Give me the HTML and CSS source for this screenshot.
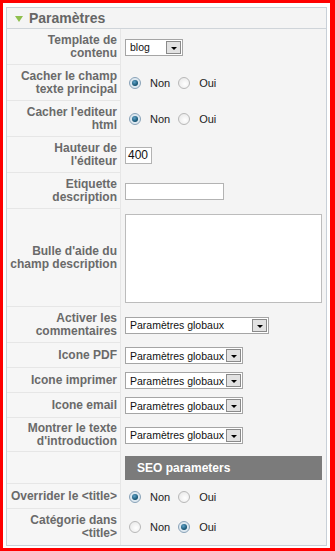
FILE: index.html
```html
<!DOCTYPE html>
<html lang="fr">
<head>
    <meta charset="UTF-8">
    <meta name="viewport" content="width=device-width, initial-scale=1.0">
    <title>Paramètres</title>
    <link rel="stylesheet" href="styles.css">
</head>
<body>

    <!-- Parameters pane -->
    <div class="frame">
        <div class="panel">
            <h3 class="panel-title"><span class="toggler"></span>Paramètres</h3>

            <div class="param">
                <div class="key">Template de<br>contenu</div>
                <div class="value">
                    <div class="select" style="width: 58px"><span>blog</span><i class="arrow"></i></div>
                </div>
            </div>

            <div class="param">
                <div class="key">Cacher le champ<br>texte principal</div>
                <div class="value">
                    <span class="radio on"></span><span class="opt">Non</span>
                    <span class="radio"></span><span class="opt">Oui</span>
                </div>
            </div>

            <div class="param">
                <div class="key">Cacher l'editeur<br>html</div>
                <div class="value">
                    <span class="radio on"></span><span class="opt">Non</span>
                    <span class="radio"></span><span class="opt">Oui</span>
                </div>
            </div>

            <div class="param">
                <div class="key">Hauteur de<br>l'éditeur</div>
                <div class="value">
                    <div class="text-input" style="width: 27px">400</div>
                </div>
            </div>

            <div class="param">
                <div class="key">Etiquette<br>description</div>
                <div class="value">
                    <div class="text-input" style="width: 99px"></div>
                </div>
            </div>

            <div class="param tall">
                <div class="key">Bulle d'aide du<br>champ description</div>
                <div class="value">
                    <div class="textarea"></div>
                </div>
            </div>

            <div class="param">
                <div class="key">Activer les<br>commentaires</div>
                <div class="value">
                    <div class="select" style="width: 144px"><span>Paramètres globaux</span><i class="arrow"></i></div>
                </div>
            </div>

            <div class="param short">
                <div class="key">Icone PDF</div>
                <div class="value">
                    <div class="select" style="width: 118px"><span>Paramètres globaux</span><i class="arrow"></i></div>
                </div>
            </div>

            <div class="param short">
                <div class="key">Icone imprimer</div>
                <div class="value">
                    <div class="select" style="width: 118px"><span>Paramètres globaux</span><i class="arrow"></i></div>
                </div>
            </div>

            <div class="param short">
                <div class="key">Icone email</div>
                <div class="value">
                    <div class="select" style="width: 118px"><span>Paramètres globaux</span><i class="arrow"></i></div>
                </div>
            </div>

            <div class="param intro">
                <div class="key">Montrer le texte<br>d'introduction</div>
                <div class="value">
                    <div class="select" style="width: 118px"><span>Paramètres globaux</span><i class="arrow"></i></div>
                </div>
            </div>

            <div class="param seo">
                <div class="key"></div>
                <div class="value">
                    <div class="seo-bar">SEO parameters</div>
                </div>
            </div>

            <div class="param short">
                <div class="key">Overrider le &lt;title&gt;</div>
                <div class="value">
                    <span class="radio on"></span><span class="opt">Non</span>
                    <span class="radio"></span><span class="opt">Oui</span>
                </div>
            </div>

            <div class="param last">
                <div class="key">Catégorie dans<br>&lt;title&gt;</div>
                <div class="value">
                    <span class="radio"></span><span class="opt">Non</span>
                    <span class="radio on"></span><span class="opt">Oui</span>
                </div>
            </div>
        </div>
    </div>

</body>
</html>
```

FILE: styles.css
```css
body {
    margin: 0;
    font-family: "Liberation Sans", Arial, sans-serif;
    background: #fff;
}
.frame {
    border-style: solid;
    border-color: #f00;
    border-width: 3px 5px 3px 3px;
    padding: 4px 3px 2px 3px;
}
.panel {
    border: 1px solid #c9d0d8;
    background: #f4f4f4;
}
.panel-title {
    margin: 0;
    height: 20px;
    display: flex;
    align-items: center;
    border-bottom: 1px solid #cfd4d9;
    background: #f4f4f4;
    color: #666;
    font-size: 14px;
    font-weight: bold;
}
.toggler {
    width: 0;
    height: 0;
    margin: 1px 6px 0 8px;
    border-left: 4px solid transparent;
    border-right: 4px solid transparent;
    border-top: 6px solid #8fbf4d;
}
.param {
    display: grid;
    grid-template-columns: 114px 1fr;
    height: 36px;
}
.param.short {
    height: 25px;
}
.param.tall {
    height: 98px;
}
.param.intro {
    height: 34px;
}
.param.seo {
    height: 32px;
}
.key {
    box-sizing: border-box;
    display: flex;
    align-items: center;
    justify-content: flex-end;
    text-align: right;
    padding-right: 3px;
    background: #f6f6f6;
    border-right: 1px solid #e6e6e6;
    border-bottom: 1px solid #e6e6e6;
    color: #6a6a6a;
    font-size: 12px;
    font-weight: bold;
    line-height: 13px;
}
.param.last .key {
    border-bottom: none;
}
.value {
    display: flex;
    align-items: center;
    padding: 0 4px;
    font-size: 11px;
    color: #222;
}
.select {
    box-sizing: border-box;
    display: flex;
    align-items: center;
    justify-content: space-between;
    height: 17px;
    background: #fff;
    border: 1px solid #a5a5a5;
    color: #111;
}
.select span {
    padding-left: 4px;
    font-size: 10.5px;
    white-space: nowrap;
}
.arrow {
    box-sizing: border-box;
    display: flex;
    flex-shrink: 0;
    align-items: center;
    justify-content: center;
    width: 15px;
    height: 13px;
    margin-right: 1px;
    background: #e2e2e2;
    border: 1px solid #8a8a8a;
}
.arrow::after {
    content: "";
    width: 0;
    height: 0;
    margin-top: 2px;
    border-left: 3px solid transparent;
    border-right: 3px solid transparent;
    border-top: 3px solid #000;
}
.text-input {
    box-sizing: border-box;
    height: 17px;
    padding: 1px 2px;
    background: #fff;
    border: 1px solid #b3b3b3;
    color: #111;
    font-size: 12px;
    line-height: 13px;
}
.textarea {
    box-sizing: border-box;
    width: 100%;
    height: 89px;
    background: #fff;
    border: 1px solid #bcbcbc;
}
.radio {
    box-sizing: border-box;
    display: inline-flex;
    align-items: center;
    justify-content: center;
    width: 12px;
    height: 12px;
    margin: 0 9px 0 4px;
    border-radius: 50%;
    border: 1px solid #b8b8b8;
    background: radial-gradient(circle at 60% 60%, #fff 0%, #e4e4e4 100%);
}
.radio.on {
    border-color: #8aa3b8;
    background: #dde8f0;
}
.radio.on::after {
    content: "";
    width: 6px;
    height: 6px;
    border-radius: 50%;
    background: radial-gradient(circle at 40% 35%, #5fa2c8 0%, #12506e 70%);
}
.opt {
    margin-right: 4px;
    font-size: 11px;
}
.seo-bar {
    box-sizing: border-box;
    width: 100%;
    height: 24px;
    padding-left: 12px;
    display: flex;
    align-items: center;
    background: #7b7b7b;
    color: #fff;
    font-size: 12px;
    font-weight: bold;
}
```
